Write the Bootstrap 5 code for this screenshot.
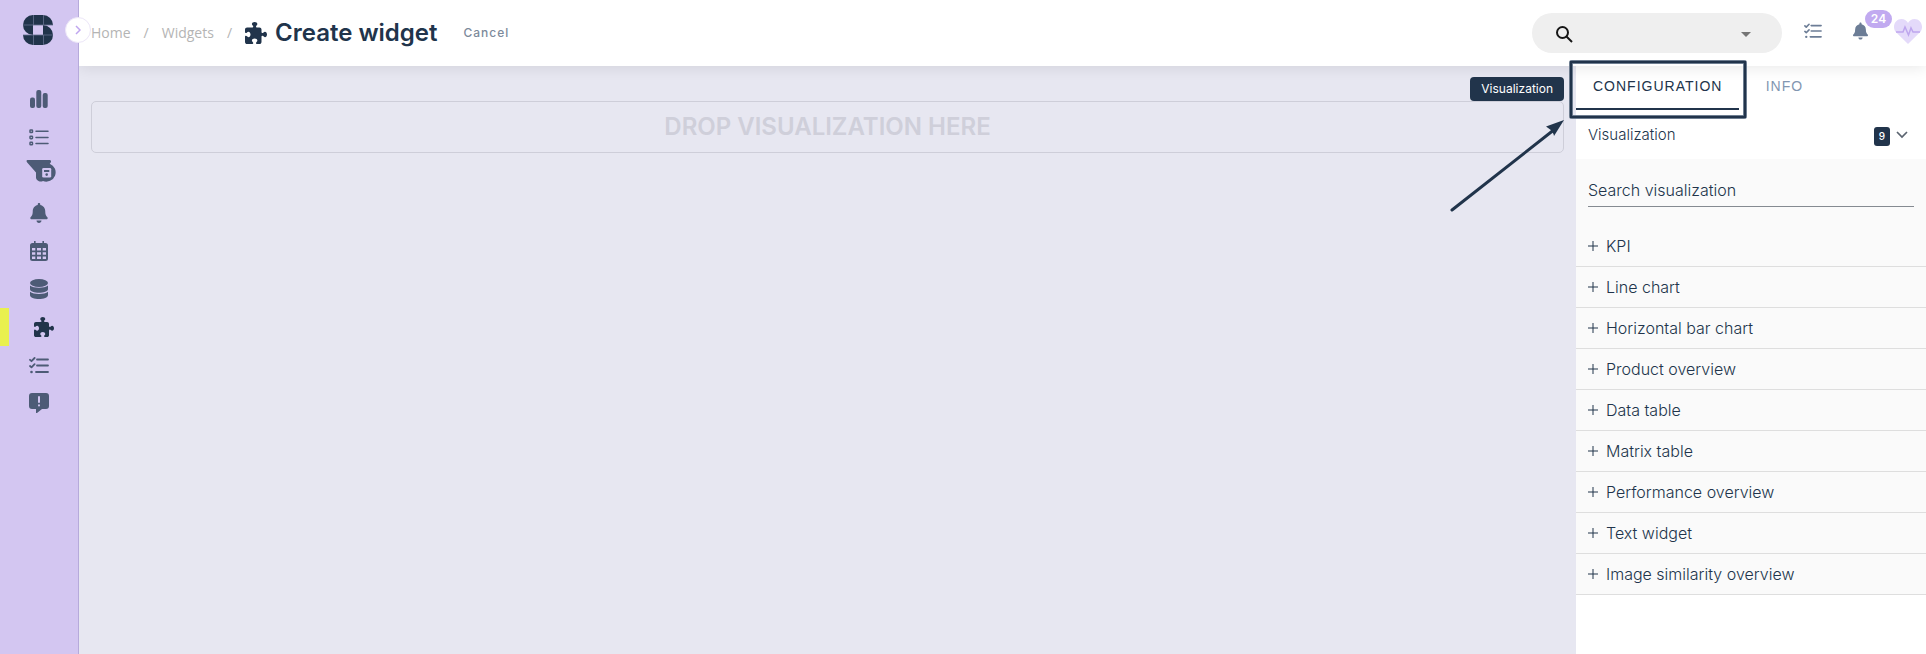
<!DOCTYPE html>
<html lang="en">
<head>
<meta charset="utf-8">
<meta name="viewport" content="width=device-width, initial-scale=1">
<title>Create widget</title>
<link href="https://cdn.jsdelivr.net/npm/bootstrap@5.3.0/dist/css/bootstrap.min.css" rel="stylesheet">
<style>
  :root { --navy: #21344b; --slate: #4d5b76; --lilac: #d3c6f1; --steel: #6c7d96; }
  body { font-family: Inter, "Liberation Sans", sans-serif; color: var(--navy); background: #e7e7f1; }
  svg { display: block; flex: none; }
  .side-rail { width: 79px; background: var(--lilac); border-right: 1px solid #b6aadb; position: relative; z-index: 3; }
  .side-logo { padding: 15px 0 35px 23px; }
  .rail-toggle { position: absolute; left: 65px; top: 17px; width: 26px; height: 26px; background: #fff; border: 1px solid #ece6f8; color: #bfa5ef; }
  .rail-link { height: 38px; color: var(--slate); padding-right: 1px; }
  .rail-link.active { color: var(--navy); border-left: 9px solid #e9f04f; padding-right: 0; }
  .top-bar { height: 66px; background: #fff; box-shadow: 0 2px 14px rgba(0,0,0,.09); position: relative; z-index: 2; padding-left: 12px; padding-right: 4px; }
  .crumbs { --bs-breadcrumb-divider-color: #b4b4b4; --bs-breadcrumb-item-padding-x: 13px; font: 400 14px/20px "Open Sans", sans-serif; }
  .crumbs a { color: #b4b4b4; text-decoration: none; }
  .crumbs h1 { font: 600 24px/32px Inter, sans-serif; }
  .cancel-btn { font-size: 12px; line-height: 18px; font-weight: 500; letter-spacing: 1px; color: #7d8a9b; margin-left: 26px; }
  .top-search { width: 250px; height: 40px; background: #efefef; position: relative; margin-right: 22px; }
  .top-search select { appearance: none; width: 100%; height: 40px; border: 0; background: transparent; border-radius: 20px; }
  .top-search svg { position: absolute; pointer-events: none; }
  .search-glyph { left: 24px; top: 13px; }
  .caret-glyph { right: 31px; top: 19px; }
  .top-btn { color: var(--steel); }
  .bell-btn { margin-left: 31px; position: relative; }
  .count-pill { position: absolute; left: 12px; top: -12px; width: 27px; height: 18px; border-radius: 9px; background: #c1aaf0; color: #fff; font-size: 12px; line-height: 18px; font-weight: 600; }
  .heart-btn { margin-left: 26px; }
  .canvas-area { padding: 11px 12px; }
  .type-tag { background: var(--navy); color: #fff; font-size: 12px; line-height: 24px; padding: 0 11px; border-radius: 4px; }
  .drop-zone { height: 52px; border: 1px solid #ceced9; border-radius: 5px; color: #cfcfda; font: 600 24px/50px Inter, sans-serif; }
  .config-panel { width: 350px; background: #fff; position: relative; }
  .panel-tabs button { height: 44px; min-width: 90px; font: 400 14px/20px "Liberation Sans", sans-serif; letter-spacing: 1px; color: #8296b1; border: 0; background: transparent; padding: 0 17px 4px; }
  .panel-tabs button.active { color: var(--navy); border-bottom: 2px solid var(--navy); padding-bottom: 2px; }
  .group-head { height: 49px; font-size: 15px; line-height: 20px; font-weight: 300; padding: 0 18px 0 12px; border: 0; background: #fff; color: var(--navy); }
  .group-count { width: 16px; height: 19px; border-radius: 3px; background: var(--navy); color: #fff; font-size: 10px; line-height: 19px; font-weight: 500; margin: 3px 6px 0 0; }
  .group-body { background: #fafafa; }
  .search-wrap { padding: 15px 12px 19px; }
  .search-wrap input { width: 100%; height: 33px; border: 0; border-bottom: 1px solid #858a91; background: transparent; font-size: 16px; font-weight: 300; color: var(--navy); padding: 0; }
  .search-wrap input::placeholder { color: var(--navy); opacity: 1; }
  .viz-item { height: 41px; border: 0; border-bottom: 1px solid #dedede; background: transparent; font-size: 16px; line-height: 20px; font-weight: 300; color: var(--navy); padding: 0 12px; gap: 8px; }
  .callout { position: absolute; left: -126px; top: -8px; z-index: 4; pointer-events: none; }
</style>
</head>
<body>
<svg width="0" height="0" class="position-absolute" aria-hidden="true">
  <symbol id="puzzle" viewBox="0 0 512 512"><path fill="currentColor" d="M192 104.8c0-9.2-5.8-17.3-13.2-22.8C167.2 73.3 160 61.3 160 48c0-26.5 28.7-48 64-48s64 21.5 64 48c0 13.3-7.2 25.3-18.8 34c-7.4 5.5-13.2 13.6-13.2 22.8c0 12.8 10.4 23.2 23.2 23.2H336c26.5 0 48 21.5 48 48v56.8c0 12.8 10.4 23.2 23.2 23.2c9.2 0 17.3-5.8 22.8-13.2c8.7-11.6 20.7-18.8 34-18.8c26.5 0 48 28.7 48 64s-21.5 64-48 64c-13.3 0-25.3-7.2-34-18.8c-5.5-7.4-13.6-13.2-22.8-13.2c-12.8 0-23.2 10.4-23.2 23.2V464c0 26.5-21.5 48-48 48H279.2c-12.8 0-23.2-10.4-23.2-23.2c0-9.2 5.8-17.3 13.2-22.8c11.6-8.7 18.8-20.7 18.8-34c0-26.5-28.7-48-64-48s-64 21.5-64 48c0 13.3 7.2 25.3 18.8 34c7.4 5.5 13.2 13.6 13.2 22.8c0 12.8-10.4 23.2-23.2 23.2H48c-26.5 0-48-21.5-48-48V343.2C0 330.4 10.4 320 23.2 320c9.2 0 17.3 5.8 22.8 13.2C54.7 344.8 66.7 352 80 352c26.5 0 48-28.7 48-64s-21.5-64-48-64c-13.3 0-25.3 7.2-34 18.8C40.5 250.2 32.4 256 23.2 256C10.4 256 0 245.6 0 232.8V176c0-26.5 21.5-48 48-48H168.8c12.8 0 23.2-10.4 23.2-23.2z"/></symbol>
  <symbol id="bell" viewBox="0 0 448 512"><path fill="currentColor" d="M224 512c35.32 0 63.97-28.65 63.97-64H160.03c0 35.35 28.65 64 63.97 64zm215.39-149.71c-19.32-20.76-55.47-51.99-55.47-154.29 0-77.7-54.48-139.9-127.94-155.16V32c0-17.67-14.32-32-31.98-32s-31.98 14.33-31.98 32v20.84C118.56 68.1 64.08 130.3 64.08 208c0 102.3-36.15 133.53-55.47 154.29-6 6.45-8.66 14.16-8.61 21.71.11 16.4 12.98 32 32.1 32h383.8c19.12 0 32-15.6 32.1-32 .05-7.55-2.61-15.27-8.61-21.71z"/></symbol>
  <symbol id="tasks" viewBox="0 0 20 17"><g fill="none" stroke="currentColor" stroke-width="1.8" stroke-linecap="round" stroke-linejoin="round"><path d="M8 2.500h11M8 8.500h11M7 15h12M1 2.800l1.500 1.400L5.600 1M1 9l1.500 1.400L5.600 7.200"/></g><circle cx="2.500" cy="15" r="1.300" fill="currentColor"/></symbol>
</svg>

<div class="d-flex min-vh-100">
  <aside class="side-rail flex-shrink-0">
    <div class="side-logo">
      <svg width="30" height="30" viewBox="0 0 30 30" role="img" aria-label="Logo">
        <path fill="#21344b" d="M10 0h10a10 10 0 0 1 10 10H20v10H10A10 10 0 0 1 10 0z"/>
        <path fill="#21344b" d="M20 10a10 10 0 0 1 0 20H10A10 10 0 0 1 0 20h20z"/>
        <path fill="#d3c6f1" d="M10 10h10v10H10z"/>
        <path stroke="#66708e" stroke-width=".8" d="M10.500 0v10M20.500 0v10M10.500 20v10M20.500 20v10M0 10h30M0 20h30"/>
      </svg>
    </div>
    <button class="rail-toggle btn rounded-circle p-0 d-flex align-items-center justify-content-center" aria-label="Expand menu">
      <svg width="6" height="10" viewBox="0 0 6 10"><path d="M1 1l4 4-4 4" fill="none" stroke="currentColor" stroke-width="1.500"/></svg>
    </button>
    <nav class="d-flex flex-column" aria-label="Main">
      <a href="#" class="rail-link d-flex align-items-center justify-content-center" aria-label="Dashboards"><svg width="18" height="18" viewBox="0 0 18 18" fill="currentColor"><rect y="7.500" width="5" height="10.500" rx="2"/><rect x="6.300" width="5" height="18" rx="2"/><rect x="12.700" y="3" width="5" height="15" rx="2"/></svg></a>
      <a href="#" class="rail-link d-flex align-items-center justify-content-center" aria-label="Lists"><svg width="20" height="17" viewBox="0 0 20 17" fill="none" stroke="currentColor" stroke-width="1.500"><rect x="1" y="1" width="2.500" height="2.500" rx=".6"/><rect x="1" y="7.200" width="2.500" height="2.500" rx=".6"/><rect x="1" y="13.300" width="2.500" height="2.500" rx=".6"/><path d="M7 2.300h12M7 8.500h12M7 14.600h12" stroke-linecap="round"/></svg></a>
      <a href="#" class="rail-link d-flex align-items-start justify-content-center pt-1 ps-1" aria-label="Saved filters"><svg width="30" height="22" viewBox="0 0 30 22"><path fill="currentColor" d="M1.500 0h22c1.400 0 2 1.400 1.200 2.500l-1 1.200A9 9 0 1 1 17 21c-3 1.500-7-.5-7-3.500v-5L1.200 2.500C.3 1.500.3 0 1.500 0z"/><rect x="16.200" y="8" width="9" height="9.500" rx="1.300" fill="#d3c6f1"/><path fill="currentColor" d="M18 10h5.300v2H18z"/><circle cx="20.700" cy="14.600" r="1.300" fill="currentColor"/></svg></a>
      <a href="#" class="rail-link d-flex align-items-center justify-content-center" aria-label="Alerts"><svg width="18" height="20"><use href="#bell"/></svg></a>
      <a href="#" class="rail-link d-flex align-items-center justify-content-center" aria-label="Calendar"><svg width="18" height="20" viewBox="0 0 18 20"><path fill="currentColor" fill-rule="evenodd" d="M4 0h1.600v2h6.800V0H14v2h1.500A2.500 2.500 0 0 1 18 4.500v13a2.500 2.500 0 0 1-2.500 2.500h-13A2.500 2.500 0 0 1 0 17.500v-13A2.500 2.500 0 0 1 2.500 2H4zM2 7v2.500h3.300V7zM7 7v2.500h4V7zM12.700 7v2.500H16V7zM2 11.200v2.500h3.300v-2.500zM7 11.200v2.500h4v-2.500zM12.700 11.200v2.500H16v-2.500zM2 15.500V18h3.300v-2.500zM7 15.500V18h4v-2.500zM12.700 15.500V18H16v-2.500z"/></svg></a>
      <a href="#" class="rail-link d-flex align-items-center justify-content-center" aria-label="Data"><svg width="18" height="20" viewBox="0 0 18 20" fill="currentColor"><ellipse cx="9" cy="4" rx="9" ry="4"/><path d="M0 6.500c3.500 3 14.500 3 18 0V10c0 5-18 5-18 0zM0 12.700c3.500 3 14.500 3 18 0V16c0 5.300-18 5.300-18 0z"/></svg></a>
      <a href="#" class="rail-link active d-flex align-items-center justify-content-center" aria-label="Widgets" aria-current="page"><svg width="20" height="20"><use href="#puzzle"/></svg></a>
      <a href="#" class="rail-link d-flex align-items-center justify-content-center" aria-label="Tasks"><svg width="20" height="17"><use href="#tasks"/></svg></a>
      <a href="#" class="rail-link d-flex align-items-center justify-content-center" aria-label="Feedback"><svg width="20" height="20" viewBox="0 0 20 20"><path fill="currentColor" d="M3 0h14a3 3 0 0 1 3 3v10a3 3 0 0 1-3 3h-4l-5 4q-1 .5-1-.5V16H3a3 3 0 0 1-3-3V3a3 3 0 0 1 3-3z"/><path stroke="#d3c6f1" stroke-width="2" stroke-linecap="round" d="M10 4v5M10 12.300v.1"/></svg></a>
    </nav>
  </aside>

  <div class="flex-grow-1 d-flex flex-column">
    <header class="top-bar d-flex align-items-center">
      <nav class="d-flex align-items-center" aria-label="Breadcrumb">
        <ol class="breadcrumb crumbs mb-0 align-items-center">
          <li class="breadcrumb-item"><a href="#">Home</a></li>
          <li class="breadcrumb-item"><a href="#">Widgets</a></li>
          <li class="breadcrumb-item d-flex align-items-center"><svg width="22" height="22"><use href="#puzzle"/></svg><h1 class="mb-0 ms-2">Create widget</h1></li>
        </ol>
        <button class="cancel-btn btn border-0 p-0">Cancel</button>
      </nav>
      <div class="top-search rounded-pill ms-auto">
        <select aria-label="Search"><option></option></select>
        <svg class="search-glyph" width="17" height="17" viewBox="0 0 17 17" fill="none" stroke="#161616" stroke-width="2"><circle cx="6.500" cy="6.500" r="5.500"/><path d="M10.500 10.500l5.500 5.500"/></svg>
        <svg class="caret-glyph" width="10" height="5"><path fill="#757575" d="M0 0h10L5 5z"/></svg>
      </div>
      <button class="top-btn btn border-0 p-0 pb-1" aria-label="Tasks"><svg width="18" height="16"><use href="#tasks"/></svg></button>
      <button class="top-btn bell-btn btn border-0 p-0 pb-1" aria-label="Notifications"><svg width="15" height="18"><use href="#bell"/></svg><span class="count-pill">24</span></button>
      <button class="heart-btn btn border-0 p-0 pb-1" aria-label="System health"><svg width="28" height="25" viewBox="0 0 28 25"><path fill="#e4dafa" d="M14 25L2.300 13.500C-2.600 8.500.8 0 7.500 0 10.500 0 13 1.700 14 4c1-2.300 3.500-4 6.500-4 6.700 0 10.100 8.500 5.200 13.500z"/><path d="M2 13h7l2-5 3.500 8L17 9l2 4h7" fill="none" stroke="#bea6ee" stroke-width="1.500"/></svg></button>
    </header>

    <div class="d-flex flex-grow-1">
      <main class="canvas-area flex-grow-1">
        <div class="d-flex justify-content-end"><span class="type-tag">Visualization</span></div>
        <div class="drop-zone text-center">DROP VISUALIZATION HERE</div>
      </main>

      <aside class="config-panel flex-shrink-0">
        <div class="panel-tabs d-flex" role="tablist">
          <button class="active" role="tab" aria-selected="true">CONFIGURATION</button>
          <button role="tab" aria-selected="false">INFO</button>
        </div>
        <button class="group-head w-100 d-flex align-items-center text-start" aria-expanded="true">
          <span class="me-auto">Visualization</span>
          <span class="group-count text-center">9</span>
          <svg width="12" height="8" viewBox="0 0 12 8"><path d="M1 1l5 5 5-5" fill="none" stroke="#5b6470" stroke-width="1.700"/></svg>
        </button>
        <div class="group-body">
          <div class="search-wrap"><input type="text" placeholder="Search visualization" aria-label="Search visualization"></div>
          <button class="viz-item w-100 d-flex align-items-center"><svg width="10" height="10" viewBox="0 0 10 10"><path d="M5 0v10M0 5h10" stroke="currentColor"/></svg>KPI</button>
          <button class="viz-item w-100 d-flex align-items-center"><svg width="10" height="10" viewBox="0 0 10 10"><path d="M5 0v10M0 5h10" stroke="currentColor"/></svg>Line chart</button>
          <button class="viz-item w-100 d-flex align-items-center"><svg width="10" height="10" viewBox="0 0 10 10"><path d="M5 0v10M0 5h10" stroke="currentColor"/></svg>Horizontal bar chart</button>
          <button class="viz-item w-100 d-flex align-items-center"><svg width="10" height="10" viewBox="0 0 10 10"><path d="M5 0v10M0 5h10" stroke="currentColor"/></svg>Product overview</button>
          <button class="viz-item w-100 d-flex align-items-center"><svg width="10" height="10" viewBox="0 0 10 10"><path d="M5 0v10M0 5h10" stroke="currentColor"/></svg>Data table</button>
          <button class="viz-item w-100 d-flex align-items-center"><svg width="10" height="10" viewBox="0 0 10 10"><path d="M5 0v10M0 5h10" stroke="currentColor"/></svg>Matrix table</button>
          <button class="viz-item w-100 d-flex align-items-center"><svg width="10" height="10" viewBox="0 0 10 10"><path d="M5 0v10M0 5h10" stroke="currentColor"/></svg>Performance overview</button>
          <button class="viz-item w-100 d-flex align-items-center"><svg width="10" height="10" viewBox="0 0 10 10"><path d="M5 0v10M0 5h10" stroke="currentColor"/></svg>Text widget</button>
          <button class="viz-item w-100 d-flex align-items-center"><svg width="10" height="10" viewBox="0 0 10 10"><path d="M5 0v10M0 5h10" stroke="currentColor"/></svg>Image similarity overview</button>
        </div>
        <!-- Callout frame round the active tab, with its arrow to the drop zone -->
        <svg class="callout" width="300" height="160" viewBox="0 0 300 160" aria-hidden="true">
          <g fill="none"><rect x="121" y="4" width="174" height="55" rx="1" stroke="#8391a3" stroke-width="4"/><rect x="121" y="4" width="174" height="55" stroke="#21344b" stroke-width="2.400"/></g>
          <path d="M2 152L105 71" stroke="#21344b" stroke-width="3" stroke-linecap="round"/>
          <path fill="#21344b" d="M114 62L96 68.500l4.500 3.200 3 4.300L104 78z"/>
        </svg>
      </aside>
    </div>
  </div>
</div>
<script src="https://cdn.jsdelivr.net/npm/bootstrap@5.3.0/dist/js/bootstrap.bundle.min.js"></script>
</body>
</html>
